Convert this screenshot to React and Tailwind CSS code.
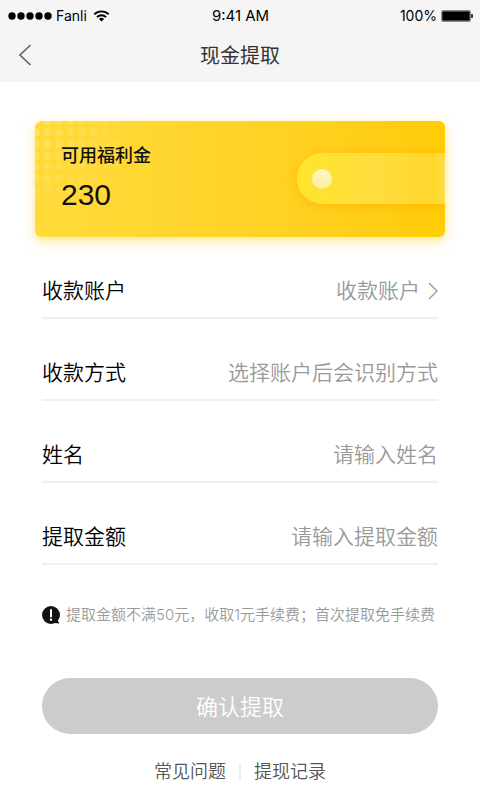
const fields = [
  { id: 'method', label: '收款方式', placeholder: '选择账户后会识别方式', readOnly: true },
  { id: 'name', label: '姓名', placeholder: '请输入姓名' },
  { id: 'amount', label: '提取金额', placeholder: '请输入提取金额' },
]

const dotCols = [0, 1, 2, 3, 4, 5, 6, 7]
const dotRows = [0, 1, 2, 3, 4, 5, 6]

function StatusBar() {
  return (
    <div className="grid grid-cols-3 items-center h-8 pl-2 pr-[7px] text-[15px] leading-8 text-black">
      <div className="flex items-center">
        <svg width="44" height="8" viewBox="0 0 44 8" aria-hidden="true">
          {[4, 13, 22, 31, 40].map((x) => (
            <circle key={x} cx={x} cy="4" r="3.7" />
          ))}
        </svg>
        <span className="ml-1 text-[14px]">Fanli</span>
        <svg className="ml-1.5" width="17" height="12" viewBox="0 0 18 13" fill="none" stroke="#000" strokeWidth="2" aria-hidden="true">
          <path d="M1.2 4.6A11.2 11.2 0 0 1 16.8 4.6" />
          <path d="M4 7.7A7.2 7.2 0 0 1 14 7.7" />
          <path d="M9 12.4 6.3 9.7A3.9 3.9 0 0 1 11.7 9.7Z" fill="#000" stroke="none" />
        </svg>
      </div>
      <span className="text-center">9:41 AM</span>
      <div className="flex items-center justify-end gap-1">
        <span className="text-[14px]">100%</span>
        <svg width="32" height="12" viewBox="0 0 32 12" aria-hidden="true">
          <rect x="0.7" y="0.7" width="28.6" height="10.6" rx="1.5" fill="#000" stroke="#8a8a8a" strokeWidth="1.4" />
          <path d="M30.3 4h.7c.5 0 .8.4.8.8v2.4c0 .4-.3.8-.8.8h-.7z" />
        </svg>
      </div>
    </div>
  )
}

function BalanceCard() {
  return (
    <section className="relative mx-[35px] mt-[39px] h-[116px] rounded-md bg-gradient-to-r from-[#ffdb3a] to-[#ffcc05] shadow-[0_4px_12px_rgba(255,208,30,0.5)]">
      <div className="absolute inset-0 overflow-hidden rounded-md">
        <svg width="90" height="80" viewBox="0 0 90 80" fill="#fff" aria-hidden="true">
          {dotRows.map((r) =>
            dotCols.map((c) => (
              <circle
                key={`${r}-${c}`}
                cx={1 + c * 11.5}
                cy={r * 11.5}
                r="3.8"
                opacity={0.22 * (1 - c / 11) * (1 - r / 11)}
              />
            ))
          )}
        </svg>
        {/* Wallet clasp */}
        <div className="absolute right-0 top-8 flex items-center w-[148px] h-[51px] pl-[15px] rounded-l-full bg-[linear-gradient(90deg,#ffe42c_0%,#ffdd3e_55%,#ffd62b_94%,#ffde55_100%)] shadow-[0_2px_12px_rgba(255,174,0,0.65)]">
          <span className="size-5 rounded-full bg-gradient-to-b from-[#fff6c2] to-[#ffeea0]" />
        </div>
      </div>
      <div className="relative pl-[26px] pt-[22px] text-[#111]">
        <h2 className="text-[18px] leading-[26px] font-medium">可用福利金</h2>
        <p className="mt-2 font-['Liberation_Sans',sans-serif] text-[30px] leading-9">230</p>
      </div>
    </section>
  )
}

export default function App() {
  return (
    <div className="min-h-screen bg-white font-[Inter,'Noto_Sans_CJK_SC',sans-serif]">
      <header className="bg-[#f5f5f5]">
        <StatusBar />
        <div className="grid grid-cols-[40px_1fr_40px] items-center h-[50px] px-3 pb-1">
          <button type="button" aria-label="返回" className="flex items-center h-10 pl-1.5">
            <svg width="14" height="22" viewBox="0 0 14 22" fill="none" stroke="#666" strokeWidth="1.7" aria-hidden="true">
              <path d="M12.5 1 2 11l10.5 10" />
            </svg>
          </button>
          <h1 className="pt-0.5 text-center text-[20px] leading-8 font-normal text-[#333]">现金提取</h1>
        </div>
      </header>

      <main>
        <BalanceCard />

        <form className="mx-[42px]">
          <div className="flex items-end justify-between h-[82px] pb-2.5 border-b-2 border-[#f0f0f0] text-[21px] leading-8">
            <span id="account-label" className="font-[350] text-[#000]">收款账户</span>
            <button type="button" aria-labelledby="account-label" className="flex items-center gap-2 font-[350] text-[#999]">
              收款账户
              <svg width="10" height="18" viewBox="0 0 10 18" fill="none" stroke="#999" strokeWidth="1.4" aria-hidden="true">
                <path d="m1 1 8 8-8 8" />
              </svg>
            </button>
          </div>
          {fields.map((f) => (
            <div key={f.id} className="flex items-end h-[82px] pb-2.5 border-b-2 border-[#f0f0f0] text-[21px] leading-8">
              <label htmlFor={f.id} className="shrink-0 font-[350] text-[#000]">{f.label}</label>
              <input
                id={f.id}
                type="text"
                placeholder={f.placeholder}
                readOnly={f.readOnly}
                className="flex-1 min-w-0 h-8 text-right font-[350] text-[#111] placeholder:text-[#999] outline-none"
              />
            </div>
          ))}

          <div className="flex items-center mt-[38px] -mr-2 gap-1.5 text-[15px] leading-6 font-[350] text-[#999]">
            <svg className="shrink-0" width="18" height="18" viewBox="0 0 18 18" aria-hidden="true">
              <circle cx="9" cy="9" r="9" fill="#111" />
              <path d="M16 12v3l1.5 2.5-5-.5z" fill="#111" />
              <path d="M9 4v6.5" stroke="#fff" strokeWidth="2" strokeLinecap="round" />
              <circle cx="9" cy="13.8" r="1.2" fill="#fff" />
            </svg>
            <p className="whitespace-nowrap">提取金额不满50元，收取1元手续费；首次提取免手续费</p>
          </div>

          <button type="submit" disabled className="w-full h-14 mt-[51px] pt-0.5 rounded-full bg-[#ccc] text-[22px] font-[350] text-white">
            确认提取
          </button>
        </form>

        <nav className="flex items-center justify-center mt-[26px] text-[18px] leading-6 font-[350] text-[#555]">
          <a href="#faq">常见问题</a>
          <span className="w-0.5 h-[18px] mx-[13px] bg-[#eee]" />
          <a href="#records">提现记录</a>
        </nav>
      </main>
    </div>
  )
}
